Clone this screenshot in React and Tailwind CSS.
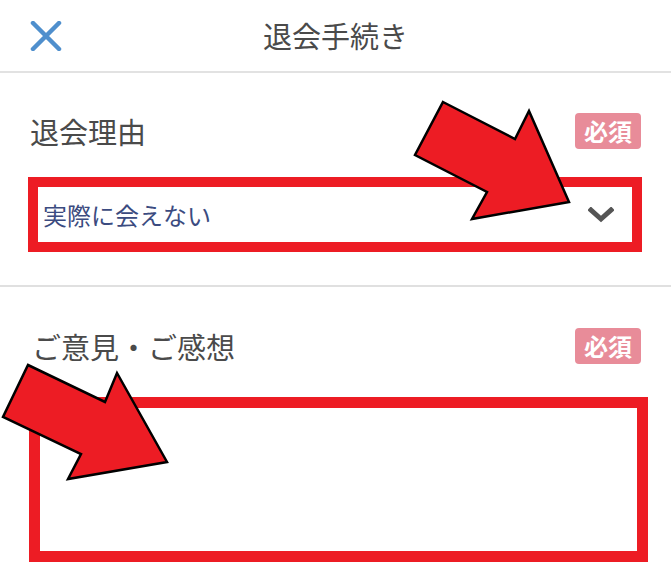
import React from "react";

function Badge() {
  return (
    <span className="flex h-[36px] w-[66px] items-center justify-center rounded-[4px] bg-[#e88c99] text-[24px] font-bold leading-none text-white">
      必須
    </span>
  );
}

export default function App() {
  return (
    <div
      className="relative h-[565px] w-[671px] overflow-hidden bg-white text-[#4a4a4a]"
      style={{ fontFamily: '"Noto Sans CJK JP", "Noto Sans", sans-serif' }}
    >
      {/* Header */}
      <header className="grid h-[73px] grid-cols-[1fr_auto_1fr] items-center border-b-2 border-[#e2e2e2]">
        <div className="pl-[30px] pt-[1px]">
          <svg width="32" height="30" viewBox="0 0 32 30" fill="none">
            <path d="M3 2 L29 28 M29 2 L3 28" stroke="#4f8fcd" strokeWidth="4.5" strokeLinecap="round" />
          </svg>
        </div>
        <h1 className="text-[29px] font-normal leading-none tracking-[0px] text-[#4a4a4a]">退会手続き</h1>
        <div />
      </header>

      {/* Section 1 */}
      <section className="border-b-2 border-[#e0e0e0] pb-[33px] pt-[40px]">
        <div className="flex h-[36px] items-center justify-between pl-[30px] pr-[30px]">
          <span className="text-[29px] leading-none">退会理由</span>
          <Badge />
        </div>
        <div className="ml-[28px] mt-[28px] flex h-[75px] w-[614px] items-center justify-between border-[10px] border-[#ed1c24] bg-white pl-[5px] pr-[18px]">
          <span className="text-[24px] leading-none text-[#3b4b80]">実際に会えない</span>
          <svg width="26" height="16" viewBox="0 0 26 16" fill="none">
            <path d="M3 3 L13 12 L23 3" stroke="#555555" strokeWidth="5" strokeLinecap="square" strokeLinejoin="miter" />
          </svg>
        </div>
      </section>

      {/* Section 2 */}
      <section className="pt-[41px]">
        <div className="flex h-[36px] items-center justify-between pl-[32px] pr-[30px]">
          <span className="text-[29px] leading-none">ご意見・ご感想</span>
          <Badge />
        </div>
        <div className="ml-[29px] mt-[33px] h-[165px] w-[619px] border-[11px] border-[#ed1c24] bg-white" />
      </section>

      {/* Annotation arrows */}
      <svg
        className="pointer-events-none absolute left-0 top-0"
        width="671"
        height="565"
        viewBox="0 0 671 565"
      >
        <polygon
          points="443,102 515,139 529,111 569,202 472,219 487,192 415,155"
          fill="#ed1c24"
          stroke="#000"
          strokeWidth="2.5"
          strokeLinejoin="miter"
        />
        <polygon
          points="28,365 105,402 117,373 167,462 68,479 81,454 3,417"
          fill="#ed1c24"
          stroke="#000"
          strokeWidth="2.5"
          strokeLinejoin="miter"
        />
      </svg>
    </div>
  );
}
